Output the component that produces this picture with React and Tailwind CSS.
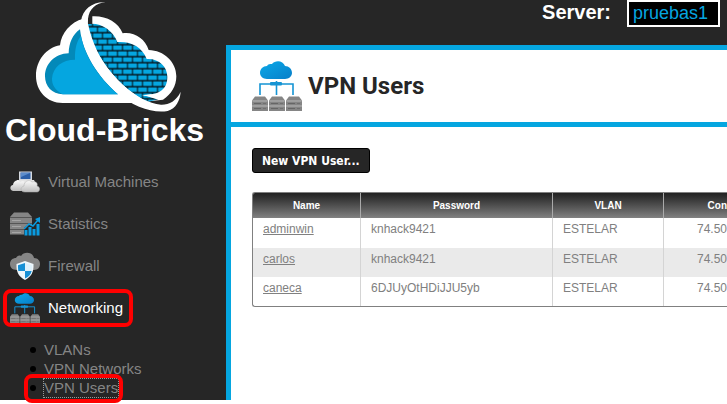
const users = [
  { name: "adminwin", password: "knhack9421", vlan: "ESTELAR", ip: "74.50" },
  { name: "carlos", password: "knhack9421", vlan: "ESTELAR", ip: "74.50" },
  { name: "caneca", password: "6DJUyOtHDiJJU5yb", vlan: "ESTELAR", ip: "74.50" },
];

function Logo() {
  return (
    <svg className="ml-[30px] block h-[115px] w-[160px]" viewBox="0 0 480 345" aria-hidden="true">
      <defs>
        <pattern id="bricks" x="7" y="-10" width="30" height="36" patternUnits="userSpaceOnUse">
          <rect width="30" height="36" fill="#05070a" />
          <rect x="2" y="2" width="27" height="14" fill="#05a6e0" />
          <rect x="-13" y="20" width="27" height="14" fill="#05a6e0" />
          <rect x="17" y="20" width="27" height="14" fill="#05a6e0" />
        </pattern>
      </defs>
      {/* cloud outline */}
      <path
        fill="#fff"
        d="M98 309C50 309 18 272 18 228C18 180 50 143 90 136C94 99 121 66 160 56L187 49C229 47 264 66 278 100C313 95 345 116 356 150C402 151 439 186 439 229C439 258 424 283 399 299L305 309Z"
      />
      {/* left half */}
      <path
        fill="#0389b9"
        d="M98 283C66 283 45 258 45 229C45 192 74 161 116 160C117 128 128 104 150 88C158 160 203 229 264 283Z"
      />
      <path
        fill="#05a6e0"
        d="M98 283C76 272 65 254 66 235C69 201 96 179 135 179C134 148 140 123 153 108C164 170 207 235 264 283Z"
      />
      {/* brick half */}
      <path
        fill="url(#bricks)"
        d="M174 72C213 67 248 90 262 126C302 123 337 140 350 177C385 174 412 199 412 230C412 268 389 284 340 285L386 298L352 306C266 260 198 183 174 72Z"
      />
      <path fill="#262626" d="M174 46L187 48V72H172Z" />
      {/* swoosh */}
      <path
        fill="#fff"
        d="M227 7C190 4 158 26 153 64C145 127 192 217 258 276C310 322 371 341 413 333C438 325 450 302 452 275C439 303 416 315 393 314C320 307 244 232 202 157C184 120 171 86 174 56C178 27 196 10 227 7Z"
      />
      <path fill="#fff" d="M336 286L363 283L399 295L388 300L352 289Z" />
    </svg>
  );
}

function Server({ x, y }) {
  return (
    <g transform={`translate(${x} ${y})`}>
      <path d="M3 0H13L16 4V14.500H0V4Z" fill="#858585" />
      <path d="M0.500 4.500H15.500M0 9.500H16" stroke="#b8b8b8" />
      <path d="M2 7H9M2 12H9" stroke="#666" />
      <path d="M11 7H14M11 12H14" stroke="#707070" />
    </g>
  );
}

function NetworkIcon({ className }) {
  return (
    <svg className={className} viewBox="0 0 50 50" aria-hidden="true">
      <defs>
        <linearGradient id="netCloud" x1="0" y1="0" x2="1" y2="1">
          <stop offset="0" stopColor="#0ba9e8" />
          <stop offset="1" stopColor="#087fc9" />
        </linearGradient>
      </defs>
      <path
        fill="url(#netCloud)"
        d="M15 18C11 18 8 15 8 12C8 8 11 5 15 5C16 3 18 3 20 3C23 -1 31 -1 33 5C37 5 40 8 40 12C40 15 37 18 33 18Z"
      />
      <path d="M8 34V23H41V34M24.500 20V34" fill="none" stroke="#1594d4" strokeWidth="1.600" />
      <rect x="18" y="21" width="12" height="3.500" rx="1" fill="#1594d4" />
      <Server x="0" y="35.500" />
      <Server x="17" y="35.500" />
      <Server x="34" y="35.500" />
    </svg>
  );
}

function MachinesIcon() {
  return (
    <svg className="h-[22px] w-[30px]" viewBox="0 0 30 22" aria-hidden="true">
      <defs>
        <linearGradient id="puff" x1="0" y1="0" x2="0" y2="1">
          <stop offset="0" stopColor="#fafafa" />
          <stop offset="1" stopColor="#bdbdbd" />
        </linearGradient>
      </defs>
      <path d="M9 0.500H22V9H9Z" fill="#d5d9df" />
      <path d="M10.500 1.500H20.500V8H10.500Z" fill="#2c5fa8" />
      <path d="M11 2H20L11 6Z" fill="#5c8ccb" />
      <path d="M7 9H24L26 13H5Z" fill="#e4e4e4" />
      <path
        d="M3 20C-1 19 0 14 3 14C3 10 8 8 10 11C14 9 17 12 16 15C20 16 18 20 15 20Z"
        fill="url(#puff)"
      />
      <path
        d="M15 21C10 21 10 16 14 15C14 10 19 8 22 11C26 10 28 12 27 15C31 16 30 21 27 21Z"
        fill="url(#puff)"
        stroke="#aaa"
        strokeWidth="0.500"
      />
    </svg>
  );
}

function StatisticsIcon() {
  return (
    <svg className="h-6 w-[30px]" viewBox="0 0 30 24" aria-hidden="true">
      <path d="M4 0.500H18L22 5V22.500H0V5Z" fill="#858585" />
      <path d="M0 5.500H22M0 11.500H22M0 17.500H22" stroke="#555" />
      <path d="M2 8.500H11M2 14.500H11M2 20.500H11" stroke="#a5a5a5" />
      <path d="M14 23V16L19 12L23 14L30 6V24H14Z" fill="#262626" />
      <path d="M16 23.500V18M20 23.500V15M24 23.500V17M28 23.500V12" stroke="#0a9be0" strokeWidth="3" />
      <path d="M14 17L19 12L23 14L28 8" stroke="#0a9be0" strokeWidth="1.500" fill="none" />
      <path d="M25 7L30 5V11Z" fill="#0a9be0" />
    </svg>
  );
}

function FirewallIcon() {
  return (
    <svg className="h-7 w-[30px]" viewBox="0 0 30 28" aria-hidden="true">
      <path
        d="M7 18C2 18 0 15 0 12C0 8 3 6 6 6C7 4 9 3 11 4C14 -1 23 0 24 6C28 6 30 9 30 12C30 15 28 18 24 18Z"
        fill="#858585"
      />
      <path d="M15 9L23.500 12C24 20 21 25 15 28C9 25 6 20 6.500 12Z" fill="#eef7fc" />
      <path d="M15 11V19H8.300C8 17 7.900 15 8 13.300Z" fill="#168fd4" />
      <path d="M15 19H21.700C20.500 23 18.500 25 15 26.500Z" fill="#168fd4" />
      <path d="M15 11L22 13.300V19H15Z" fill="#dff1fb" />
    </svg>
  );
}

function NavItem({ icon, children, active }) {
  return (
    <li className="relative flex h-[42px] items-center gap-2 pl-[10px]">
      <span className="flex w-[30px] justify-center">{icon}</span>
      <a href="#" className={active ? "text-white" : "text-[#858585]"}>
        {children}
      </a>
      {active && (
        <span className="pointer-events-none absolute top-[2px] left-[3px] h-[38px] w-[130px] rounded-lg border-4 border-[#f00]" />
      )}
    </li>
  );
}

function SubItem({ children, focused }) {
  return (
    <li className="relative flex h-[19px] items-center gap-2 pl-[30px]">
      <span className="size-[6px] rounded-full bg-black" />
      <a
        href="#"
        className={focused ? "outline-1 outline-dotted outline-[#999]" : ""}
      >
        {children}
      </a>
      {focused && (
        <span className="pointer-events-none absolute -top-1 left-6 h-[29px] w-[99px] rounded-lg border-4 border-[#f00]" />
      )}
    </li>
  );
}

export default function App() {
  return (
    <div className="overflow-x-hidden bg-white pb-1 font-['Liberation_Sans',Arial,sans-serif]">
      <div className="flex bg-[#262626]">
        {/* sidebar */}
        <aside className="w-[226px] shrink-0 pb-[3px]">
          <Logo />
          <p className="pl-[5px] text-[32px] leading-[30px] font-bold text-white">Cloud-Bricks</p>
          <nav className="pt-4 text-[15px]">
            <ul>
              <NavItem icon={<MachinesIcon />}>Virtual Machines</NavItem>
              <NavItem icon={<StatisticsIcon />}>Statistics</NavItem>
              <NavItem icon={<FirewallIcon />}>Firewall</NavItem>
              <NavItem icon={<NetworkIcon className="size-[30px]" />} active>
                Networking
              </NavItem>
            </ul>
            <ul className="pt-[11px] leading-[18px] text-[#858585]">
              <SubItem>VLANs</SubItem>
              <SubItem>VPN Networks</SubItem>
              <SubItem focused>VPN Users</SubItem>
            </ul>
          </nav>
        </aside>

        <div className="flex min-w-0 flex-1 flex-col">
          {/* top bar */}
          <div className="flex h-[45px] items-start justify-end gap-4 pr-[7px]">
            <label htmlFor="server" className="text-xl leading-6 font-bold text-white">
              Server:
            </label>
            <input
              id="server"
              defaultValue="pruebas1"
              className="h-[27px] w-[93px] border-2 border-white bg-black pl-1 text-lg leading-6 text-[#05a6e0]"
            />
          </div>

          <main className="flex-1 border-t-[5px] border-l-[5px] border-[#05a6e0] bg-white">
            <header className="flex h-[77px] items-center gap-[6px] border-b-[5px] border-[#05a6e0] pl-[21px]">
              <NetworkIcon className="size-[50px]" />
              <h1 className="font-[Roboto,sans-serif] text-2xl font-bold text-[#262626]">
                VPN Users
              </h1>
            </header>

            <div className="flex flex-col items-start gap-[19px] pt-[21px] pl-[21px]">
              <button className="h-[25px] rounded-[3px] border border-black bg-[#262626] px-[9px] font-['DejaVu_Sans_Condensed','DejaVu_Sans',sans-serif] text-xs font-bold whitespace-nowrap text-white">
                New VPN User...
              </button>

              <div className="w-full overflow-hidden rounded-l-[3px] border-y border-l border-[#808080]">
                <table className="w-full table-fixed border-separate border-spacing-0 text-left text-xs text-[#808080]">
                  <thead>
                    <tr className="h-[25px] bg-linear-to-b from-[#222] to-[#828282] text-center text-[10px] text-white">
                      <th className="w-[108px] border-r border-[#aaa]">Name</th>
                      <th className="w-[192px] border-r border-[#aaa]">Password</th>
                      <th className="w-[111px] border-r border-[#aaa]">VLAN</th>
                      <th className="text-right">Con</th>
                    </tr>
                  </thead>
                  <tbody>
                    {users.map((u) => (
                      <tr
                        key={u.name}
                        className="h-[29px] align-top leading-4 first:h-[30px] even:bg-[#eaeaea]"
                      >
                        <td className="border-r border-[#d4d4d4] px-[10px] pt-[3px]">
                          <a href="#" className="underline">
                            {u.name}
                          </a>
                        </td>
                        <td className="border-r border-[#d4d4d4] px-[10px] pt-[3px]">{u.password}</td>
                        <td className="border-r border-[#d4d4d4] px-[10px] pt-[3px]">{u.vlan}</td>
                        <td className="pt-[3px] text-right">{u.ip}</td>
                      </tr>
                    ))}
                  </tbody>
                </table>
              </div>
            </div>
          </main>
        </div>
      </div>
    </div>
  );
}
